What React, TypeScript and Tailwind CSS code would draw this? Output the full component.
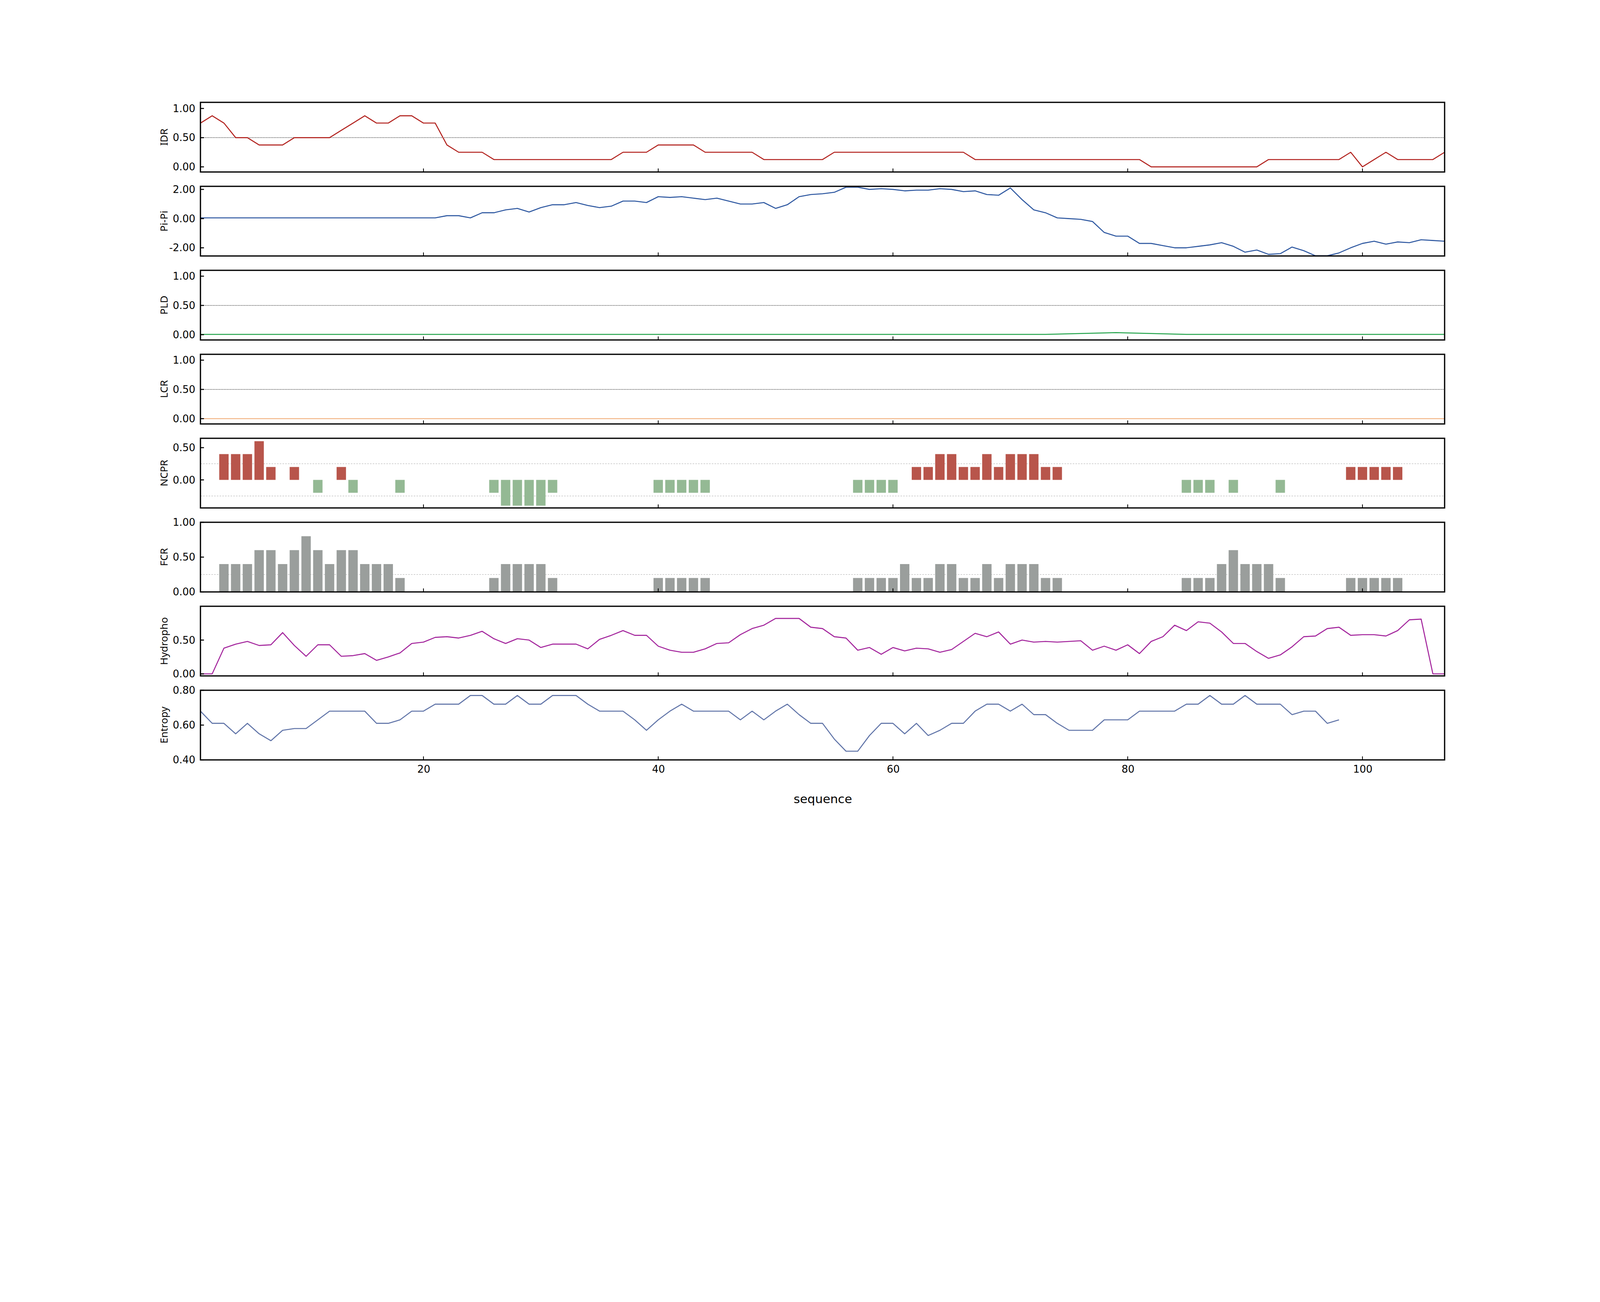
import React from "react";

// the page is laid out in CSS px; the photo is taken at 6250/4096 device pixel ratio
const S = 4096 / 6250;
const W = 4860 * S;
const H = 272 * S;
const LEFT = 104 * S;
const N0 = 1;
const N1 = 107;

const px = (x: number) => ((x - N0) / (N1 - N0)) * W;

const seq = (from: number, vals: number[]) => vals.map((v, i) => [from + i, v] as [number, number]);

const fill = (a: number, b: number, v: number) => Array.from({ length: b - a + 1 }, () => v);

const idr = seq(1, [
  0.75, 0.875, 0.75, 0.5, 0.5, 0.375, 0.375, 0.375, 0.5, 0.5, 0.5, 0.5, 0.625, 0.75, 0.875, 0.75, 0.75, 0.875, 0.875, 0.75,
  0.75, 0.375, 0.25, 0.25, 0.25, ...fill(26, 36, 0.125), 0.25, 0.25, 0.25, 0.375, 0.375, 0.375, 0.375, ...fill(44, 48, 0.25),
  ...fill(49, 54, 0.125), ...fill(55, 66, 0.25), ...fill(67, 81, 0.125), ...fill(82, 91, 0), ...fill(92, 98, 0.125),
  0.25, 0, 0.125, 0.25, 0.125, 0.125, 0.125, 0.125, 0.25,
]);

const pipi = seq(1, [
  ...fill(1, 21, 0.05), 0.2, 0.2, 0.05, 0.4, 0.4, 0.6, 0.7, 0.45, 0.75, 0.95, 0.95, 1.1, 0.9, 0.75, 0.85, 1.2, 1.2, 1.1,
  1.5, 1.45, 1.5, 1.4, 1.3, 1.4, 1.2, 1.0, 1.0, 1.1, 0.7, 0.95, 1.5, 1.65, 1.7, 1.8, 2.15, 2.15, 2.0, 2.05, 2.0, 1.9, 1.95,
  1.95, 2.05, 2.0, 1.85, 1.9, 1.65, 1.6, 2.1, 1.3, 0.6, 0.4, 0.05, 0.0, -0.05, -0.2, -0.95, -1.2, -1.2, -1.7, -1.7, -1.85,
  -2.0, -2.0, -1.9, -1.8, -1.65, -1.9, -2.3, -2.15, -2.45, -2.4, -1.95, -2.2, -2.55, -2.55, -2.35, -2.0, -1.7, -1.55,
  -1.75, -1.6, -1.65, -1.45, -1.5, -1.55,
]);

const pld = seq(1, Array.from({ length: 107 }, (_, i) => {
  const x = i + 1;
  const bump = Math.max(0, 1 - Math.abs(x - 79) / 6) * 0.03;
  return 0.005 + bump;
}));

const lcr = seq(1, fill(1, 107, 0));

const hydro = seq(1, [
  0, 0, 0.38, 0.44, 0.48, 0.42, 0.43, 0.61, 0.42, 0.26, 0.43, 0.43, 0.26, 0.27, 0.3, 0.2, 0.25, 0.31, 0.45, 0.47, 0.54,
  0.55, 0.53, 0.57, 0.63, 0.52, 0.45, 0.52, 0.5, 0.39, 0.44, 0.44, 0.44, 0.37, 0.51, 0.57, 0.64, 0.57, 0.57, 0.41, 0.35,
  0.32, 0.32, 0.37, 0.45, 0.46, 0.58, 0.67, 0.72, 0.82, 0.82, 0.82, 0.69, 0.67, 0.55, 0.53, 0.35, 0.39, 0.29, 0.39, 0.34,
  0.38, 0.37, 0.32, 0.36, 0.48, 0.6, 0.55, 0.62, 0.44, 0.5, 0.47, 0.48, 0.47, 0.48, 0.49, 0.35, 0.41, 0.35, 0.43, 0.3,
  0.48, 0.55, 0.72, 0.64, 0.77, 0.75, 0.62, 0.45, 0.45, 0.33, 0.23, 0.28, 0.4, 0.55, 0.56, 0.67, 0.69, 0.57, 0.58, 0.58,
  0.56, 0.64, 0.8, 0.81, 0, 0,
]);

const entropy = seq(1, [
  0.68, 0.61, 0.61, 0.55, 0.61, 0.55, 0.51, 0.57, 0.58, 0.58, 0.63, 0.68, 0.68, 0.68, 0.68, 0.61, 0.61, 0.63, 0.68, 0.68,
  0.72, 0.72, 0.72, 0.77, 0.77, 0.72, 0.72, 0.77, 0.72, 0.72, 0.77, 0.77, 0.77, 0.72, 0.68, 0.68, 0.68, 0.63, 0.57, 0.63,
  0.68, 0.72, 0.68, 0.68, 0.68, 0.68, 0.63, 0.68, 0.63, 0.68, 0.72, 0.66, 0.61, 0.61, 0.52, 0.45, 0.45, 0.54, 0.61, 0.61,
  0.55, 0.61, 0.54, 0.57, 0.61, 0.61, 0.68, 0.72, 0.72, 0.68, 0.72, 0.66, 0.66, 0.61, 0.57, 0.57, 0.57, 0.63, 0.63, 0.63,
  0.68, 0.68, 0.68, 0.68, 0.72, 0.72, 0.77, 0.72, 0.72, 0.77, 0.72, 0.72, 0.72, 0.66, 0.68, 0.68, 0.61, 0.63,
]);

const ncprPos: [number, number][] = [
  [3, 0.4], [4, 0.4], [5, 0.4], [6, 0.6], [7, 0.2], [9, 0.2], [13, 0.2],
  [62, 0.2], [63, 0.2], [64, 0.4], [65, 0.4], [66, 0.2], [67, 0.2], [68, 0.4], [69, 0.2], [70, 0.4], [71, 0.4], [72, 0.4],
  [73, 0.2], [74, 0.2], [99, 0.2], [100, 0.2], [101, 0.2], [102, 0.2], [103, 0.2],
];
const ncprNeg: [number, number][] = [
  [11, -0.2], [14, -0.2], [18, -0.2], [26, -0.2], [27, -0.4], [28, -0.4], [29, -0.4], [30, -0.4], [31, -0.2],
  [40, -0.2], [41, -0.2], [42, -0.2], [43, -0.2], [44, -0.2], [57, -0.2], [58, -0.2], [59, -0.2], [60, -0.2],
  [85, -0.2], [86, -0.2], [87, -0.2], [89, -0.2], [93, -0.2],
];
const fcr: [number, number][] = [
  ...seq(3, [0.4, 0.4, 0.4, 0.6, 0.6, 0.4, 0.6, 0.8, 0.6, 0.4, 0.6, 0.6, 0.4, 0.4, 0.4, 0.2]),
  ...seq(26, [0.2, 0.4, 0.4, 0.4, 0.4, 0.2]),
  ...seq(40, [0.2, 0.2, 0.2, 0.2, 0.2]),
  ...seq(57, [0.2, 0.2, 0.2, 0.2, 0.4, 0.2, 0.2, 0.4, 0.4, 0.2, 0.2, 0.4, 0.2, 0.4, 0.4, 0.4, 0.2, 0.2]),
  ...seq(85, [0.2, 0.2, 0.2, 0.4, 0.6, 0.4, 0.4, 0.4, 0.2]),
  ...seq(99, [0.2, 0.2, 0.2, 0.2, 0.2]),
];

type Bars = { pts: [number, number][]; color: string };

type PanelProps = {
  label: string;
  lo: number;
  hi: number;
  ticks: [number, string][];
  line?: { pts: [number, number][]; color: string; width?: number };
  bars?: Bars[];
  dotted?: number[];
  dashed?: number[];
};

function Panel({ label, lo, hi, ticks, line, bars, dotted = [], dashed = [] }: PanelProps) {
  const py = (v: number) => ((hi - v) / (hi - lo)) * H;
  const bw = (W / (N1 - N0)) * 0.8;
  return (
    <div className="flex items-center">
      <div className="w-[393px]" />
      <div className="w-[52px] flex justify-center">
        <span className="-rotate-90 whitespace-nowrap text-[26px] leading-none text-black [font-family:'DejaVu_Sans',sans-serif]">
          {label}
        </span>
      </div>
      <svg width={LEFT + W + 4} height={H} className="overflow-visible" style={{ fontFamily: "'DejaVu Sans', sans-serif" }}>
        <g transform={`translate(${LEFT},0)`}>
          {dotted.map((v) => (
            <line key={v} x1={0} x2={W} y1={py(v)} y2={py(v)} stroke="#000" strokeWidth={1.4} strokeDasharray="2 2" />
          ))}
          {dashed.map((v) => (
            <line key={v} x1={0} x2={W} y1={py(v)} y2={py(v)} stroke="#b8b8b8" strokeWidth={1.2} strokeDasharray="4 3" />
          ))}
          {bars?.map((b) =>
            b.pts.map(([x, v]) => (
              <rect
                key={b.color + x}
                x={px(x) - bw / 2}
                width={bw}
                y={Math.min(py(v), py(0))}
                height={Math.abs(py(v) - py(0))}
                fill={b.color}
              />
            )),
          )}
          {line && (
            <polyline
              points={line.pts.map(([x, v]) => `${px(x)},${py(v)}`).join(" ")}
              fill="none"
              stroke={line.color}
              strokeWidth={line.width ?? 2.6}
              strokeLinejoin="round"
            />
          )}
          {[20, 40, 60, 80, 100].map((x) => (
            <line key={x} x1={px(x)} x2={px(x)} y1={H} y2={H - 9} stroke="#000" strokeWidth={2} />
          ))}
          {ticks.map(([v, t]) => (
            <g key={t}>
              <line x1={0} x2={9} y1={py(v)} y2={py(v)} stroke="#000" strokeWidth={2.6} />
              <text x={-13} y={py(v)} dy="0.35em" textAnchor="end" fontSize={26} fill="#000">
                {t}
              </text>
            </g>
          ))}
          <rect x={0} y={0} width={W} height={H} fill="none" stroke="#000" strokeWidth={3.2} />
        </g>
      </svg>
    </div>
  );
}

export default function App() {
  const std: [number, string][] = [[1, "1.00"], [0.5, "0.50"], [0, "0.00"]];
  return (
    <div className="w-[4096px] h-[2184px] bg-white flex flex-col pt-[262px] [font-family:'DejaVu_Sans',sans-serif]">
      <div className="flex flex-col gap-[36.7px]">
        <Panel label="IDR" lo={-0.088} hi={1.105} ticks={std} dotted={[0.5]} line={{ pts: idr, color: "#b2221e" }} />
        <Panel
          label="Pi-Pi"
          lo={-2.56}
          hi={2.21}
          ticks={[[2, "2.00"], [0, "0.00"], [-2, "-2.00"]]}
          line={{ pts: pipi, color: "#2d57a0" }}
        />
        <Panel label="PLD" lo={-0.09} hi={1.1} ticks={std} dotted={[0.5]} line={{ pts: pld, color: "#22a34a" }} />
        <Panel label="LCR" lo={-0.09} hi={1.1} ticks={std} dotted={[0.5]} line={{ pts: lcr, color: "#f0a870", width: 2 }} />
        <Panel
          label="NCPR"
          lo={-0.435}
          hi={0.645}
          ticks={[[0.5, "0.50"], [0, "0.00"]]}
          dashed={[0.25, -0.25]}
          bars={[
            { pts: ncprPos, color: "#b8554b" },
            { pts: ncprNeg, color: "#94b994" },
          ]}
        />
        <Panel label="FCR" lo={0} hi={1} ticks={std} dashed={[0.25]} bars={[{ pts: fcr, color: "#9a9e9c" }]} />
        <Panel
          label="Hydropho"
          lo={-0.03}
          hi={1.0}
          ticks={[[0.5, "0.50"], [0, "0.00"]]}
          line={{ pts: hydro, color: "#a3249c" }}
        />
        <Panel
          label="Entropy"
          lo={0.4}
          hi={0.8}
          ticks={[[0.8, "0.80"], [0.6, "0.60"], [0.4, "0.40"]]}
          line={{ pts: entropy, color: "#6074a8" }}
        />
      </div>
      <div className="flex">
        <div className="w-[514px]" />
        <svg width={W} height={130} className="overflow-visible" style={{ fontFamily: "'DejaVu Sans', sans-serif" }}>
          {[20, 40, 60, 80, 100].map((x) => (
            <text key={x} x={px(x)} y={24} dy="0.35em" textAnchor="middle" fontSize={26} fill="#000">
              {x}
            </text>
          ))}
          <text x={W / 2} y={100} dy="0.35em" textAnchor="middle" fontSize={31} fill="#000">
            sequence
          </text>
        </svg>
      </div>
    </div>
  );
}
